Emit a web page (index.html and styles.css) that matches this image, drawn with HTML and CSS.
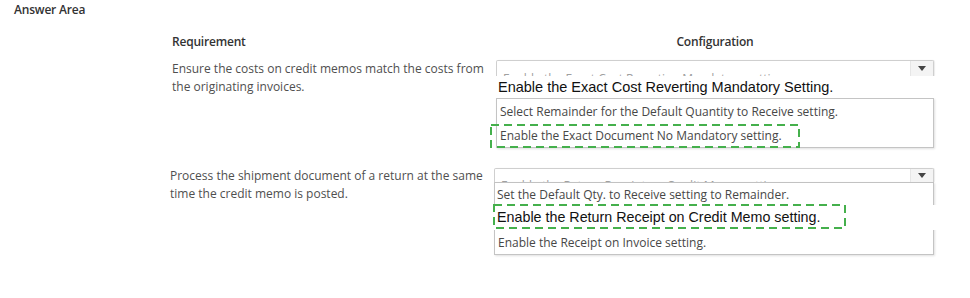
FILE: index.html
```html
<html lang="en">
<head>
    <meta charset="UTF-8">
    <title>Answer Area</title>
    <link rel="stylesheet" href="styles.css">
</head>
<body>
    <div class="title">Answer Area</div>

    <div class="answer">
        <div class="head">Requirement</div>
        <div class="head head-config">Configuration</div>

        <!-- first requirement -->
        <div class="req">Ensure the costs on credit memos match the costs from the originating invoices.</div>
        <div class="combo">
            <div class="select">
                <span class="select-text">Enable the Exact Cost Reverting Mandatory setting.</span>
                <span class="arrow"></span>
            </div>
            <div class="pick">Enable the Exact Cost Reverting Mandatory Setting.</div>
            <div class="options">
                <div class="opt">Select Remainder for the Default Quantity to Receive setting.</div>
                <div class="opt">
                    Enable the Exact Document No Mandatory setting.
                    <svg class="mark mark-a" width="310" height="24">
                        <rect x="1" y="1" width="308" height="22" fill="none" stroke="#45b04c" stroke-width="2" stroke-dasharray="8 5"/>
                    </svg>
                </div>
            </div>
        </div>

        <!-- second requirement -->
        <div class="req req-2">Process the shipment document of a return at the same time the credit memo is posted.</div>
        <div class="combo combo-2">
            <div class="select select-2">
                <span class="select-text">Enable the Return Receipt on Credit Memo setting.</span>
                <span class="arrow"></span>
            </div>
            <div class="options">
                <div class="opt opt-short">Set the Default Qty. to Receive setting to Remainder.</div>
                <div class="pick pick-in">
                    Enable the Return Receipt on Credit Memo setting.
                    <svg class="mark mark-b" width="353" height="25">
                        <rect x="1" y="1" width="351" height="23" fill="none" stroke="#45b04c" stroke-width="2" stroke-dasharray="8 5"/>
                    </svg>
                </div>
                <div class="opt">Enable the Receipt on Invoice setting.</div>
            </div>
        </div>
    </div>
</body>
</html>
```

FILE: styles.css
```css
body {
    margin: 0;
    background: #fff;
    font-family: 'Open Sans', 'Noto Sans', sans-serif;
    color: #4f4f4f;
    font-size: 12px;
}

.title {
    padding: 1px 14px 0;
    line-height: 18px;
    font-size: 12px;
    font-weight: 600;
    color: #333;
    letter-spacing: -0.2px;
}

.answer {
    display: grid;
    grid-template-columns: 324px 438px;
    margin: 14px 0 0 172px;
}

.head {
    line-height: 18px;
    font-weight: 600;
    color: #333;
    letter-spacing: -0.2px;
    margin-bottom: 8px;
}

.head-config {
    text-align: center;
}

.req {
    line-height: 18px;
    padding: 1px 4px 0 0;
}

.req-2 {
    margin: 18px 0 0 -2px;
}

.combo {
    display: flex;
    flex-direction: column;
    padding-top: 1px;
}

.combo-2 {
    margin: 19px 0 0 -2px;
}

.select {
    position: relative;
    height: 15px;
    overflow: hidden;
    border: 1px solid #cfcfcf;
    border-bottom: none;
    border-radius: 2px 2px 0 0;
    box-shadow: 1px 0 1px rgba(0, 0, 0, 0.08);
}

.select-2 {
    height: 13px;
}

.select-text {
    display: block;
    padding: 9px 0 0 6px;
    line-height: 18px;
    color: #a0a0a0;
}

.select-2 .select-text {
    padding-top: 8px;
}

.arrow {
    position: absolute;
    top: 0;
    right: 0;
    width: 22px;
    height: 100%;
    background: #f4f4f4;
    border-left: 1px solid #e6e6e6;
}

.arrow::after {
    content: '';
    position: absolute;
    left: 7px;
    top: 5px;
    border-left: 4px solid transparent;
    border-right: 4px solid transparent;
    border-top: 5px solid #444;
}

.select-2 .arrow::after {
    top: 4px;
}

.pick {
    position: relative;
    height: 22px;
    line-height: 23px;
    margin-right: -20px;
    padding-left: 2px;
    background: #fff;
    font-family: 'Liberation Sans', Arial, sans-serif;
    font-size: 14.5px;
    color: #111;
}

.pick-in {
    height: 25px;
    line-height: 24px;
    margin: 0 -21px 0 -1px;
    padding-left: 3px;
    font-size: 14.3px;
}

.options {
    border: 1px solid #c4c4c4;
    box-shadow: 1px 1px 2px rgba(0, 0, 0, 0.12);
}

.opt {
    position: relative;
    height: 24px;
    line-height: 26px;
    padding-left: 3px;
    color: #474747;
}

.opt-short {
    height: 22px;
    line-height: 23px;
    padding-left: 2px;
}

.mark {
    position: absolute;
    display: block;
    pointer-events: none;
}

.mark-a {
    left: -7px;
    top: 1px;
}

.mark-b {
    left: -1px;
    top: -1px;
}
```
